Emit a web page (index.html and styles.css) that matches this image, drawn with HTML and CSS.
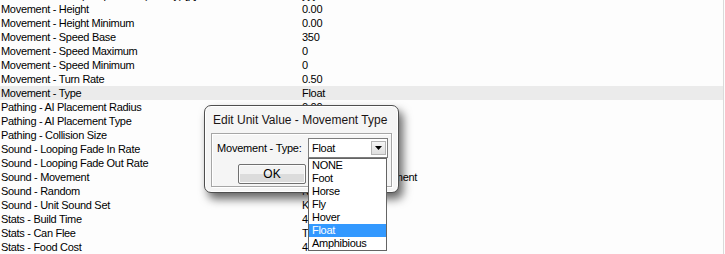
FILE: index.html
```html
<!DOCTYPE html>
<html lang="en">

<head>
  <meta charset="UTF-8">
  <title>Unit Editor - Movement Type</title>
  <link rel="stylesheet" href="styles.css">
</head>

<body>

  <div class="sheet">
    <div class="row"><span class="name">Movement - Group Separation (Priority) [p]</span><span class="val">yyy</span></div>
    <div class="row"><span class="name">Movement - Height</span><span class="val">0.00</span></div>
    <div class="row"><span class="name">Movement - Height Minimum</span><span class="val">0.00</span></div>
    <div class="row"><span class="name">Movement - Speed Base</span><span class="val">350</span></div>
    <div class="row"><span class="name">Movement - Speed Maximum</span><span class="val">0</span></div>
    <div class="row"><span class="name">Movement - Speed Minimum</span><span class="val">0</span></div>
    <div class="row"><span class="name">Movement - Turn Rate</span><span class="val">0.50</span></div>
    <div class="row selected"><span class="name">Movement - Type</span><span class="val">Float</span></div>
    <div class="row"><span class="name">Pathing - AI Placement Radius</span><span class="val">0.00</span></div>
    <div class="row"><span class="name">Pathing - AI Placement Type</span><span class="val">General</span></div>
    <div class="row"><span class="name">Pathing - Collision Size</span><span class="val">0.00</span></div>
    <div class="row"><span class="name">Sound - Looping Fade In Rate</span><span class="val">0</span></div>
    <div class="row"><span class="name">Sound - Looping Fade Out Rate</span><span class="val">0</span></div>
    <div class="row"><span class="name">Sound - Movement</span><span class="val">Default Hover Movement</span></div>
    <div class="row"><span class="name">Sound - Random</span><span class="val">None</span></div>
    <div class="row"><span class="name">Sound - Unit Sound Set</span><span class="val">Knight</span></div>
    <div class="row"><span class="name">Stats - Build Time</span><span class="val">40</span></div>
    <div class="row"><span class="name">Stats - Can Flee</span><span class="val">TRUE</span></div>
    <div class="row"><span class="name">Stats - Food Cost</span><span class="val">4</span></div>
  </div>

  <div class="dialog">
    <div class="dialog-title">Edit Unit Value - Movement Type</div>
    <div class="group">
      <div class="field">
        <label for="typeCombo">Movement - Type:</label>
        <div class="combo" id="typeCombo">
          <span class="combo-text">Float</span>
          <span class="combo-btn">
            <svg width="7" height="4" viewBox="0 0 7 4"><path d="M0 0h7L3.5 4z" fill="#000"/></svg>
          </span>
        </div>
      </div>
      <div class="buttons">
        <button class="btn btn-ok">OK</button>
        <button class="btn btn-cancel">Cancel</button>
      </div>
    </div>
  </div>

  <ul class="droplist">
    <li>NONE</li>
    <li>Foot</li>
    <li>Horse</li>
    <li>Fly</li>
    <li>Hover</li>
    <li class="active">Float</li>
    <li>Amphibious</li>
  </ul>

</body>

</html>
```

FILE: styles.css
```css
* {
  box-sizing: border-box;
}

body {
  margin: 0;
  background-color: #fdfdfd;
  font-family: "Liberation Sans", Arial, sans-serif;
  font-size: 11px;
  color: #000;
  overflow: hidden;
}

.sheet {
  width: 724px;
  margin-top: -12px;
  border-right: 1px solid #dadada;
  letter-spacing: -0.3px;
}

.row {
  display: flex;
  height: 14px;
  line-height: 14px;
  white-space: nowrap;
}

.row .name {
  width: 302px;
  padding-left: 1px;
}

.row.selected {
  background-color: #ebebeb;
}

/* dialog */
.dialog {
  position: absolute;
  left: 204px;
  top: 105px;
  width: 195px;
  height: 88px;
  padding: 6px;
  background-color: #f5f5f5;
  border: 1px solid #4e4e4e;
  border-radius: 7px;
  box-shadow: inset 0 0 0 1px #fff, 4px 6px 10px rgba(0, 0, 0, 0.6);
}

.dialog-title {
  height: 16px;
  line-height: 16px;
  padding-left: 2px;
  margin-bottom: 5px;
  font-size: 12px;
  color: #1a1414;
  white-space: nowrap;
}

.group {
  height: 54px;
  padding: 4px 0 0 5px;
  border: 1px solid #a6a6a6;
  box-shadow: inset 1px 1px 0 #fff, 1px 1px 0 #fff;
}

.field {
  display: flex;
  align-items: center;
}

.field label {
  width: 91px;
  font-size: 11px;
  letter-spacing: -0.2px;
  white-space: nowrap;
}

.combo {
  display: flex;
  align-items: center;
  justify-content: space-between;
  width: 80px;
  height: 20px;
  padding: 0 1px 0 3px;
  background-color: #fff;
  border: 1px solid #7d7d7d;
  font-size: 11px;
  letter-spacing: -0.3px;
}

.combo-btn {
  display: flex;
  align-items: center;
  justify-content: center;
  width: 15px;
  height: 14px;
  background: linear-gradient(#f6f6f6, #dedede);
  border: 1px solid #b4b4b4;
}

.buttons {
  display: flex;
  gap: 7px;
  margin-top: 6px;
  padding-left: 21px;
}

.btn {
  width: 68px;
  height: 20px;
  padding: 0;
  font-family: "Liberation Sans", Arial, sans-serif;
  font-size: 12px;
  color: #000;
  background: linear-gradient(#f2f2f2 50%, #dcdcdc 50%);
  border: 1px solid #707070;
  border-radius: 2px;
  box-shadow: inset 0 0 0 1px #fcfcfc;
}

.btn-cancel {
  width: 72px;
}

/* open dropdown */
.droplist {
  position: absolute;
  left: 308px;
  top: 158px;
  width: 79px;
  margin: 0;
  padding: 0;
  list-style: none;
  background-color: #fff;
  border: 1px solid #646464;
  font-size: 11px;
  letter-spacing: -0.3px;
}

.droplist li {
  height: 13px;
  line-height: 13px;
  padding-left: 3px;
}

.droplist li.active {
  background-color: #3399ff;
  color: #fff;
}
```
